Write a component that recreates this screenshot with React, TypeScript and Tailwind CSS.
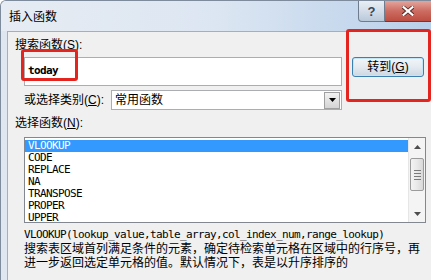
const ui = "font-['Liberation_Sans','Noto_Sans_CJK_SC',sans-serif] text-[12px] text-black";
const mono = "font-['DejaVu_Sans_Mono','Liberation_Mono',monospace] text-[11px] tracking-[-0.62px]";

const functions = ["VLOOKUP", "CODE", "REPLACE", "NA", "TRANSPOSE", "PROPER", "UPPER"];

function Key({ k }: { k: string }) {
  return (
    <span>
      (<span className="underline underline-offset-[1px]">{k}</span>)
    </span>
  );
}

function Scrollbar() {
  return (
    <div className="flex w-[17px] flex-col bg-[#f4f4f4] border-l border-[#e6e6e6]">
      <div className="flex h-[17px] items-center justify-center">
        <svg width="7" height="4" viewBox="0 0 7 4">
          <path d="M0 4 L3.5 0 L7 4 Z" fill="#4d4d4d" />
        </svg>
      </div>
      <div className="mx-[1px] mt-[3px] flex h-[33px] flex-col items-center justify-center gap-[2px] rounded-[2px] border border-[#9b9b9b] bg-gradient-to-r from-[#f3f3f3] via-[#e9e9e9] to-[#d8d8d8]">
        <div className="h-px w-[7px] bg-[#7a7a7a]" />
        <div className="h-px w-[7px] bg-[#7a7a7a]" />
        <div className="h-px w-[7px] bg-[#7a7a7a]" />
        <div className="h-px w-[7px] bg-[#7a7a7a]" />
      </div>
      <div className="flex-1" />
      <div className="flex h-[17px] items-center justify-center">
        <svg width="7" height="4" viewBox="0 0 7 4">
          <path d="M0 0 L3.5 4 L7 0 Z" fill="#4d4d4d" />
        </svg>
      </div>
    </div>
  );
}

export default function App() {
  return (
    <div className={`relative h-[280px] w-[431px] overflow-hidden rounded-tl-[6px] border-l border-t border-[#7d8b9c] bg-gradient-to-r from-[#dfe6ef] to-[#d3deeb] ${ui}`}>
      {/* title bar */}
      <div className="flex h-[30px] items-start bg-gradient-to-r from-[#e7ecf3] via-[#dce6f2] to-[#b9d0ea]">
        <div className="pl-[8px] pt-[9px] leading-[15px]">插入函数</div>
        <div className="ml-auto flex">
          <div className="flex h-[21px] w-[27px] items-center justify-center rounded-bl-[4px] border border-t-0 border-[#6e7c8e] bg-gradient-to-b from-[#e8eef5] via-[#d3dde9] to-[#b9c8da]">
            <span className="font-['Liberation_Sans',sans-serif] text-[13px] font-bold leading-none text-[#3a4756]">?</span>
          </div>
          <div className="flex h-[21px] w-[46px] items-center justify-center border-b border-[#6e3a35] bg-gradient-to-b from-[#e3a59c] via-[#cc6c61] to-[#bd4d42]">
            <svg width="12" height="10" viewBox="0 0 12 10">
              <path d="M1 1 L11 9 M11 1 L1 9" stroke="#5a2a25" strokeWidth="4" strokeLinecap="square" />
              <path d="M1.5 1.2 L10.5 8.8 M10.5 1.2 L1.5 8.8" stroke="#ffffff" strokeWidth="2.2" strokeLinecap="square" />
            </svg>
          </div>
        </div>
      </div>

      {/* client area */}
      <div className="ml-[6px] h-[250px] border-l border-t border-[#a3afbd] bg-[#f0f0f0] pl-[7px] pt-[6px]">
        <div className="h-[15px] leading-[15px]">
          搜索函数<Key k="S" />:
        </div>

        <div className="mt-[4px] flex items-start">
          <div className="ml-[9px] h-[29px] w-[318px] border border-[#abadb3] bg-white pl-[3px] pt-[3px]">
            <span className={`${mono} font-bold leading-[13px]`}>today</span>
          </div>
          <button className="ml-[10px] h-[20px] w-[72px] rounded-[3px] border border-[#3c7fb1] bg-gradient-to-b from-[#f2f6fa] via-[#e4eaf0] to-[#cdd7e1] shadow-[inset_0_0_0_1px_#c4e5f6] leading-[18px]">
            转到<Key k="G" />
          </button>
        </div>

        <div className="mt-[4px] ml-[9px] flex items-center">
          <div className="w-[87px] leading-[15px]">
            或选择类别<Key k="C" />:
          </div>
          <div className="flex h-[20px] w-[231px] items-center border border-[#abadb3] bg-white">
            <span className="flex-1 pl-[3px] leading-[16px]">常用函数</span>
            <div className="mr-[1px] flex h-[17px] w-[16px] items-center justify-center border border-[#a0a0a0] bg-gradient-to-b from-[#f2f2f2] to-[#d4d4d4]">
              <svg width="7" height="4" viewBox="0 0 7 4">
                <path d="M0 0 L3.5 4 L7 0 Z" fill="#000" />
              </svg>
            </div>
          </div>
        </div>

        <div className="mt-[6px] h-[15px] leading-[15px]">
          选择函数<Key k="N" />:
        </div>

        <div className="mt-[6px] ml-[9px] flex h-[86px] w-[402px] overflow-hidden border border-[#828790] bg-white">
          <div className="flex-1 pt-[2px]">
            {functions.map((f, i) => (
              <div
                key={f}
                className={`h-[12px] pl-[3px] leading-[12px] ${mono} ${i === 0 ? "bg-[#3399ff] text-white" : "text-black"}`}
              >
                {f}
              </div>
            ))}
          </div>
          <Scrollbar />
        </div>

        <div className={`mt-[5px] ml-[9px] leading-[13px] ${mono}`}>
          VLOOKUP(lookup_value,table_array,col_index_num,range_lookup)
        </div>
        <div className="mt-[1px] ml-[9px] w-[402px] text-[12px] leading-[14px]">
          搜索表区域首列满足条件的元素，确定待检索单元格在区域中的行序号，再进一步返回选定单元格的值。默认情况下，表是以升序排序的
        </div>
      </div>

      {/* annotation boxes */}
      <div className="absolute left-[20px] top-[48px] h-[32px] w-[57px] rounded-[3px] border-[3px] border-[#e3241f]" />
      <div className="absolute left-[345px] top-[28px] h-[73px] w-[85px] rounded-[3px] border-[3px] border-[#e3241f]" />
    </div>
  );
}
